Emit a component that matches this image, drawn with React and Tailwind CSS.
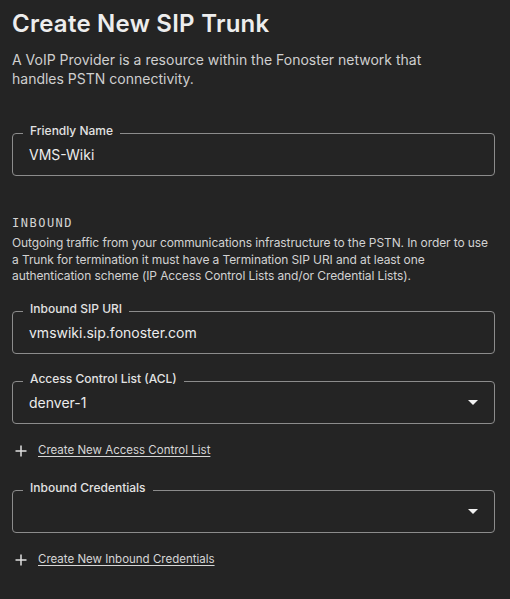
import React from 'react';

const font = { fontFamily: 'Inter, "Open Sans", sans-serif' };

const Caret = () => (
    <svg width="24" height="24" viewBox="0 0 24 24" className="text-[#f2f2f2]">
        <path d="M7 10l5 5 5-5z" fill="currentColor" />
    </svg>
);

const Plus = () => (
    <svg width="12" height="12" viewBox="0 0 12 12" className="text-[#e0e0e0]">
        <path d="M6 0.5v11M0.5 6h11" stroke="currentColor" strokeWidth="1.5" />
    </svg>
);

// Outlined field with the label sitting on the top border
const Field = ({ label, value, select, className = '' }) => (
    <div className={`relative h-[43px] rounded-[4px] border border-[#8c8c8c] flex items-center pl-[16px] pr-[9px] ${className}`}>
        <span className="absolute left-[10px] -top-[11px] px-[7px] bg-[#242424] text-[12px] leading-[16px] font-medium text-[#e2e2e2]">
            {label}
        </span>
        <span className="flex-1 text-[14px] text-[#ececec]">{value}</span>
        {select && <Caret />}
    </div>
);

const AddLink = ({ children, className = '' }) => (
    <div className={`flex items-center gap-[11px] pl-[3px] h-[16px] ${className}`}>
        <Plus />
        <a href="#" className="text-[11.5px] underline underline-offset-2 text-[#d6d6d6]">{children}</a>
    </div>
);

export default function App() {
    return (
        <div className="min-h-[599px] bg-[#242424] pl-[12px] pr-[15px] pt-[8px]" style={font}>
            <h1 className="text-[24px] leading-[32px] font-semibold tracking-[0.25px] text-[#ededed]">Create New SIP Trunk</h1>
            <p className="mt-[10px] text-[14px] leading-[19px] text-[#cfcfcf] max-w-[420px]">
                A VoIP Provider is a resource within the Fonoster network that handles PSTN connectivity.
            </p>

            <Field label="Friendly Name" value="VMS-Wiki" className="mt-[45px]" />

            <div className="mt-[39px] text-[12px] leading-[16px] tracking-[1.5px] text-[#d4d4d4]" style={{ fontFamily: '"DejaVu Sans Mono", monospace' }}>
                INBOUND
            </div>
            <p className="mt-[4px] text-[12px] leading-[16.5px] tracking-[-0.1px] text-[#d2d2d2]">
                Outgoing traffic from your communications infrastructure to the PSTN. In order to use<br />
                a Trunk for termination it must have a Termination SIP URI and at least one<br />
                authentication scheme (IP Access Control Lists and/or Credential Lists).
            </p>

            <Field label="Inbound SIP URI" value="vmswiki.sip.fonoster.com" className="mt-[26px]" />
            <Field label="Access Control List (ACL)" value="denver-1" select className="mt-[27px]" />
            <AddLink className="mt-[19px]">Create New Access Control List</AddLink>
            <Field label="Inbound Credentials" value="" select className="mt-[31px]" />
            <AddLink className="mt-[19px]">Create New Inbound Credentials</AddLink>
        </div>
    );
}
